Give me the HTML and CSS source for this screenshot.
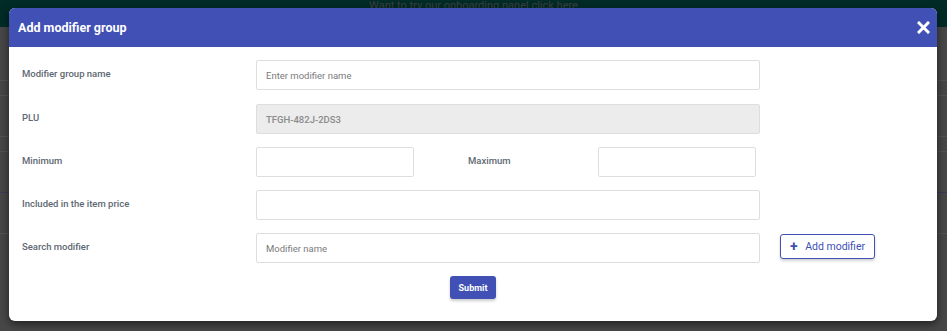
FILE: index.html
```html
<!DOCTYPE html>
<html>
    <head>
        <meta charset="utf-8" />
        <title>Add modifier group</title>
        <link rel="stylesheet" href="styles.css">
    </head>
    <body>
        <div class="page">
            <div class="topbar">Want to try our onboarding panel click here</div>
            <div class="backrows">
                <div class="backrow r1"></div>
                <div class="backrow r2"></div>
                <div class="backrow r3"></div>
                <div class="backrow r4"></div>
                <div class="backrow r5"></div>
                <div class="backrow r6"></div>
            </div>
        </div>

        <div class="modal">
            <div class="modal_header">
                <span class="modal_title">Add modifier group</span>
                <span class="modal_close">
                    <svg width="13" height="13" viewBox="0 0 13 13">
                        <path d="M2 2 L11 11 M11 2 L2 11" stroke="white" stroke-width="3" stroke-linecap="square" />
                    </svg>
                </span>
            </div>
            <div class="modal_body">
                <div class="form_row first">
                    <label class="form_label">Modifier group name</label>
                    <input class="form_input wide" type="text" placeholder="Enter modifier name">
                </div>
                <div class="form_row">
                    <label class="form_label">PLU</label>
                    <input class="form_input wide" type="text" value="TFGH-482J-2DS3" disabled>
                </div>
                <div class="form_row">
                    <label class="form_label">Minimum</label>
                    <input class="form_input half" type="text">
                    <label class="form_label inline">Maximum</label>
                    <input class="form_input half" type="text">
                </div>
                <div class="form_row">
                    <label class="form_label">Included in the item price</label>
                    <input class="form_input wide" type="text">
                </div>
                <div class="form_row">
                    <label class="form_label">Search modifier</label>
                    <input class="form_input wide" type="text" placeholder="Modifier name">
                    <button class="add_button"><span class="plus">+</span> Add modifier</button>
                </div>
                <div class="submit_row">
                    <button class="submit_button">Submit</button>
                </div>
            </div>
        </div>
    </body>
</html>
```

FILE: styles.css
```css
body {
    margin: 0px;
    padding: 0px;
    background-color: #474747;
    font-family: Roboto, 'Liberation Sans', sans-serif;
    height: 331px;
    overflow: hidden;
}

.page {
    height: 331px;
}

.topbar {
    height: 27px;
    background-color: #012b27;
    color: #3b403e;
    font-size: 11px;
    text-align: center;
    line-height: 12px;
}

.backrows {
    padding-top: 13px;
}

.backrow {
    height: 40px;
    border-bottom: 1px solid #535353;
}

.backrow.r2 {
    height: 14px;
}

.backrow.r4 {
    height: 14px;
}

.backrow.r5 {
    border-bottom-color: #3a3a55;
}

.modal {
    position: absolute;
    left: 9px;
    top: 8px;
    width: 928px;
    height: 313px;
    background-color: white;
    border-radius: 6px;
    overflow: hidden;
    box-shadow: 0px 3px 8px rgba(0, 0, 0, 0.55);
}

.modal_header {
    height: 39px;
    background-color: #4050b5;
    display: flex;
    align-items: center;
    justify-content: space-between;
    padding: 0px 7px 0px 9px;
}

.modal_title {
    color: white;
    font-size: 12.5px;
    font-weight: bold;
}

.modal_close {
    display: flex;
    margin-top: -1px;
}

.modal_body {
    padding: 13px 13px 0px 13px;
}

.form_row {
    display: flex;
    align-items: center;
    height: 30px;
    margin-bottom: 13px;
}

.form_row.first {
    margin-bottom: 14px;
}

.form_label {
    width: 234px;
    flex: none;
    color: #5d6872;
    font-size: 9.5px;
    font-weight: 500;
    margin-top: -4px;
}

.form_label.inline {
    width: 130px;
    margin-left: 54px;
}

.form_input {
    box-sizing: border-box;
    height: 30px;
    border: 1px solid #dedede;
    border-radius: 2px;
    padding: 0px 9px;
    font-family: Roboto, 'Liberation Sans', sans-serif;
    font-size: 9.5px;
    color: #555;
    background-color: white;
    outline: none;
}

.form_input::placeholder {
    color: #7b7b7b;
}

.form_input.wide {
    width: 504px;
}

.form_input.half {
    width: 158px;
}

.form_input:disabled {
    background-color: #ececec;
    color: #8a8a8a;
    font-weight: 500;
}

.add_button {
    margin-left: 20px;
    margin-top: -4px;
    height: 25px;
    width: 95px;
    box-sizing: border-box;
    border: 1px solid #4050b5;
    border-radius: 3px;
    background-color: white;
    color: #4050b5;
    font-family: Roboto, 'Liberation Sans', sans-serif;
    font-size: 10.5px;
    box-shadow: 0px 2px 3px rgba(0, 0, 0, 0.18);
    padding: 0px;
}

.plus {
    font-size: 14px;
    font-weight: bold;
    margin-right: 5px;
    vertical-align: -1px;
}

.submit_row {
    display: flex;
    justify-content: center;
}

.submit_button {
    width: 46px;
    height: 23px;
    border: 0px;
    border-radius: 3px;
    background-color: #4050b5;
    color: white;
    font-family: Roboto, 'Liberation Sans', sans-serif;
    font-size: 9px;
    font-weight: bold;
    padding: 0px;
    box-shadow: 0px 2px 3px rgba(0, 0, 0, 0.2);
}
```
